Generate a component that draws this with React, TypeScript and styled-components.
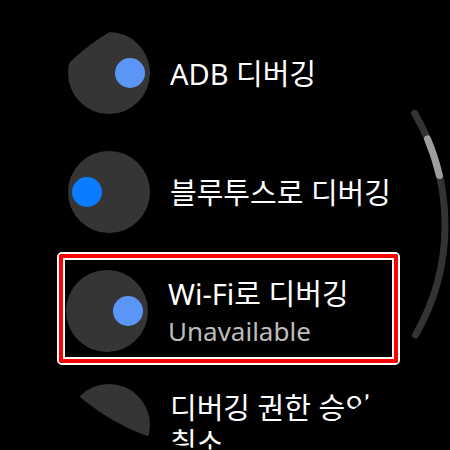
import React from "react";
import styled, { createGlobalStyle } from "styled-components";

const Global = createGlobalStyle`
  html, body { margin: 0; padding: 0; background: #000; }
  body {
    width: 450px;
    height: 450px;
    overflow: hidden;
    font-family: "Noto Sans", "Noto Sans CJK KR", sans-serif;
    -webkit-font-smoothing: antialiased;
  }
`;

const Screen = styled.div`
  position: relative;
  width: 450px;
  height: 450px;
  border-radius: 50%;
  overflow: hidden;
  background: #000;
`;

const List = styled.div`
  display: flex;
  flex-direction: column;
  padding-top: 32px;
`;

const Row = styled.div<{ $mt?: number; $inset?: number; $pr?: number }>`
  display: flex;
  align-items: center;
  gap: 20px;
  padding-left: ${(p) => p.$inset ?? 68}px;
  padding-right: ${(p) => p.$pr ?? 50}px;
  margin-top: ${(p) => p.$mt ?? 0}px;
`;

const Track = styled.div<{ $on: boolean }>`
  flex-shrink: 0;
  width: 82px;
  height: 82px;
  border-radius: 50%;
  background: #353535;
  display: flex;
  align-items: center;
  justify-content: ${(p) => (p.$on ? "flex-end" : "flex-start")};
  padding: 0 5px 0 4px;
  box-sizing: border-box;
`;

const Knob = styled.div<{ $color: string }>`
  width: 30px;
  height: 30px;
  border-radius: 50%;
  background: ${(p) => p.$color};
`;

const TextCol = styled.div`
  flex: 1;
  display: flex;
  flex-direction: column;
  min-width: 0;
`;

const Title = styled.div`
  color: #fff;
  font-size: 29px;
  line-height: 35px;
`;

const Sub = styled.div`
  color: #bdbdbd;
  font-size: 26px;
  line-height: 32px;
  margin-top: 4px;
`;

const FocusOuter = styled.div`
  margin: 19px 0 0 57px;
  width: 343px;
  box-sizing: border-box;
  border: 2px solid #fff;
  border-radius: 5px;
`;

const FocusRed = styled.div`
  border: 4px solid #f00;
  border-radius: 2px;
  box-shadow: inset 0 0 0 2px #fff;
  padding: 12px 0 7px;
`;

const Scroll = styled.svg`
  position: absolute;
  left: 0;
  top: 0;
  pointer-events: none;
`;

function Toggle({ on, color }: { on: boolean; color: string }) {
  return (
    <Track $on={on}>
      <Knob $color={color} />
    </Track>
  );
}

export default function App() {
  return (
    <>
      <Global />
      <Screen>
        <List>
          <Row>
            <Toggle on color="#5b95f6" />
            <TextCol>
              <Title>ADB 디버깅</Title>
            </TextCol>
          </Row>
          <Row $mt={37}>
            <Toggle on={false} color="#0a7cff" />
            <TextCol>
              <Title>블루투스로 디버깅</Title>
            </TextCol>
          </Row>
          <FocusOuter>
            <FocusRed>
              <Row $inset={3} $pr={4}>
                <Toggle on color="#5b95f6" />
                <TextCol>
                  <Title>Wi-Fi로 디버깅</Title>
                  <Sub>Unavailable</Sub>
                </TextCol>
              </Row>
            </FocusRed>
          </FocusOuter>
          <Row $mt={19}>
            <Toggle on={false} color="#0a7cff" />
            <TextCol>
              <Title>디버깅 권한 승인 취소</Title>
            </TextCol>
          </Row>
        </List>
        <Scroll width="450" height="450" viewBox="0 0 450 450">
          <path
            d="M 414.6 113.3 A 220 220 0 0 1 415.5 335"
            fill="none"
            stroke="#333333"
            strokeWidth="7"
            strokeLinecap="round"
          />
          <path
            d="M 427.5 139 A 220 220 0 0 1 439.4 175.5"
            fill="none"
            stroke="#9e9e9e"
            strokeWidth="7"
            strokeLinecap="round"
          />
        </Scroll>
      </Screen>
    </>
  );
}
